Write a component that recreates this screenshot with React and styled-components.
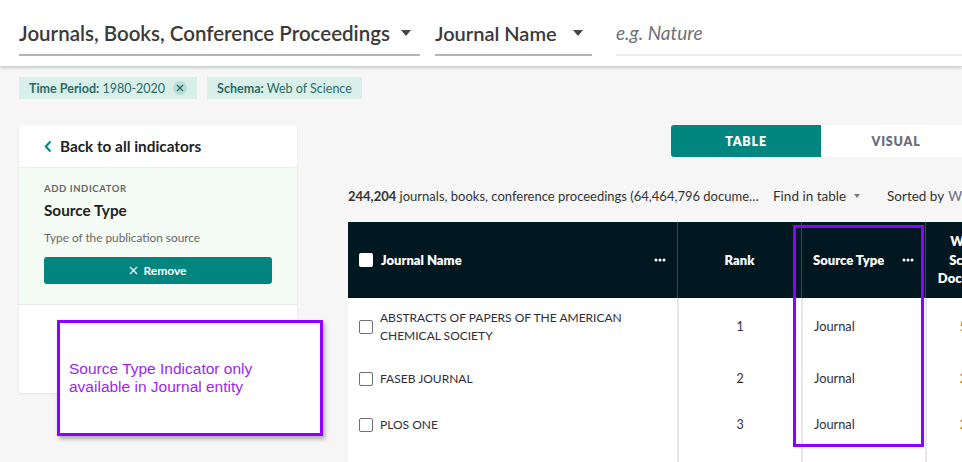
import React from "react";
import styled, { createGlobalStyle } from "styled-components";

const Global = createGlobalStyle`
  html, body { margin: 0; padding: 0; }
  body {
    background: #f6f6f6;
    font-family: "Lato", "Noto Sans", sans-serif;
    color: #333;
    width: 962px;
    height: 462px;
    overflow: hidden;
  }
  * { box-sizing: border-box; }
`;

const Page = styled.div`
  position: relative;
  width: 962px;
  height: 462px;
  overflow: hidden;
`;

const Header = styled.header`
  height: 66px;
  background: #fff;
  box-shadow: 0 2px 3px rgba(0,0,0,0.18);
  display: flex;
  align-items: flex-start;
  padding: 11px 0 0 19px;
  gap: 15px;
  position: relative;
  z-index: 1;
`;

const Select = styled.div`
  height: 45px;
  width: ${p => p.$w}px;
  border-bottom: 2px solid #b5b5b5;
  display: flex;
  align-items: center;
  justify-content: space-between;
  font-size: ${p => p.$fs || 20.5}px;
  font-weight: 600;
  color: #3a3a3a;
  padding-right: 9px;
  white-space: nowrap;
`;

const Caret = styled.span`
  width: 0;
  height: 0;
  border-left: 5px solid transparent;
  border-right: 5px solid transparent;
  border-top: 6px solid #444;
`;

const SearchInput = styled.div`
  margin-left: 9px;
  flex: 1;
  height: 45px;
  border-bottom: 2px solid #ececec;
  display: flex;
  align-items: center;
  font-size: 19px;
  font-style: italic;
  color: #6f6f7a;
`;

const Chips = styled.div`
  display: flex;
  gap: 10px;
  padding: 11px 0 0 19px;
`;

const Chip = styled.div`
  height: 22px;
  background: #d9efea;
  color: #2a6b68;
  font-size: 12.5px;
  display: flex;
  align-items: center;
  padding: 0 10px;
  gap: 8px;
  b { font-weight: 700; }
`;

const ChipClose = styled.span`
  width: 14px;
  height: 14px;
  border-radius: 50%;
  background: #b7ddd6;
  display: flex;
  align-items: center;
  justify-content: center;
`;

const Main = styled.div`
  display: flex;
  padding: 26px 0 0 19px;
  gap: 51px;
`;

const Card = styled.aside`
  width: 278px;
  height: 268px;
  flex-shrink: 0;
  background: #fff;
  box-shadow: 0 1px 3px rgba(0,0,0,0.08);
  border-radius: 3px;
  display: flex;
  flex-direction: column;
`;

const BackRow = styled.div`
  height: 43px;
  border-bottom: 1px solid #ececec;
  display: flex;
  align-items: center;
  padding-left: 25px;
  gap: 8px;
  font-size: 15.3px;
  font-weight: 700;
  color: #222;
`;

const IndicatorBox = styled.div`
  background: #f5fcf5;
  border-bottom: 1px solid #eaeaea;
  padding: 15px 25px 20px;
  display: flex;
  flex-direction: column;
`;

const Overline = styled.div`
  font-size: 9.5px;
  font-weight: 700;
  letter-spacing: 0.6px;
  color: #666;
  text-transform: uppercase;
`;

const IndicatorTitle = styled.div`
  font-size: 15.3px;
  font-weight: 700;
  color: #222;
  margin-top: 7px;
`;

const IndicatorDesc = styled.div`
  font-size: 11.8px;
  color: #666;
  margin-top: 11px;
`;

const RemoveButton = styled.button`
  margin-top: 12px;
  height: 27px;
  width: 100%;
  border: none;
  border-radius: 3px;
  background: #00857f;
  color: #fff;
  font-family: inherit;
  font-size: 12px;
  font-weight: 700;
  display: flex;
  align-items: center;
  justify-content: center;
  gap: 5px;
`;

const Content = styled.section`
  width: 720px;
  flex-shrink: 0;
  display: flex;
  flex-direction: column;
`;

const Tabs = styled.div`
  display: flex;
  margin-left: 323px;
`;

const Tab = styled.div`
  width: 150px;
  height: 32px;
  display: flex;
  align-items: center;
  justify-content: center;
  font-size: 12.5px;
  font-weight: 800;
  letter-spacing: 0.8px;
  border-radius: ${p => (p.$active ? "3px 0 0 3px" : "0")};
  background: ${p => (p.$active ? "#00857f" : "#fff")};
  color: ${p => (p.$active ? "#fff" : "#6b6b7b")};
`;

const Summary = styled.div`
  height: 65px;
  padding-top: 12px;
  display: flex;
  align-items: center;
  font-size: 13px;
  color: #333;
  white-space: nowrap;
  b { font-weight: 700; }
`;

const SummaryText = styled.span`
  width: 414px;
  flex-shrink: 0;
  overflow: hidden;
  text-overflow: ellipsis;
`;

const ToolItem = styled.span`
  display: flex;
  align-items: center;
  flex-shrink: 0;
  gap: 8px;
  margin-left: ${p => p.$ml}px;
  font-size: 13.5px;
  color: #333;
  em { font-style: normal; color: #6b6b7b; margin-left: -4px; }
`;

const SmallCaret = styled.span`
  width: 0;
  height: 0;
  border-left: 3.5px solid transparent;
  border-right: 3.5px solid transparent;
  border-top: 4px solid #777;
`;

const Table = styled.div`
  display: grid;
  grid-template-columns: 329px 124px 124px 92px;
  background: #fff;
`;

const HeadCell = styled.div`
  height: 76px;
  background: #021820;
  color: #fff;
  font-size: 13px;
  font-weight: 800;
  display: flex;
  align-items: center;
  justify-content: ${p => p.$align || "flex-start"};
  padding: 0 11px;
  gap: 8px;
  border-left: ${p => (p.$first ? "none" : "1px solid #3b4a50")};
  text-align: center;
  line-height: 1.45;
  white-space: nowrap;
`;

const Dots = styled.svg`
  margin-left: auto;
  flex-shrink: 0;
`;

const HeadBox = styled.span`
  width: 14px;
  height: 14px;
  background: #fff;
  border-radius: 2px;
  flex-shrink: 0;
`;

const Cell = styled.div`
  height: ${p => p.$h}px;
  display: flex;
  align-items: center;
  justify-content: ${p => p.$align || "flex-start"};
  padding: 0 11px;
  gap: 7px;
  font-size: ${p => p.$fs || 12}px;
  border-left: ${p => (p.$first ? "none" : "2px solid #e6e6e6")};
  line-height: 1.5;
  color: ${p => p.$color || "#2e2e3a"};
`;

const RowBox = styled.span`
  width: 14px;
  height: 14px;
  border: 1px solid #6e6e78;
  border-radius: 2px;
  flex-shrink: 0;
`;

const Annotation = styled.div`
  position: absolute;
  left: 57px;
  top: 320px;
  width: 266px;
  height: 116px;
  border: 3px solid #9000ff;
  background: #fff;
  box-shadow: 2px 3px 4px rgba(0,0,0,0.3);
  display: flex;
  align-items: center;
  padding: 0 0 0 9px;
  font-family: "Liberation Sans", Arial, sans-serif;
  font-size: 15.5px;
  line-height: 18px;
  color: #a01ff0;
`;

const ColumnHighlight = styled.div`
  position: absolute;
  left: 793px;
  top: 225px;
  width: 131px;
  height: 222px;
  border: 3px solid #9000ff;
  pointer-events: none;
`;

const rows = [
  { name: ["ABSTRACTS OF PAPERS OF THE AMERICAN", "CHEMICAL SOCIETY"], rank: 1, h: 58, v: "520,135" },
  { name: ["FASEB JOURNAL"], rank: 2, h: 46, v: "240,613" },
  { name: ["PLOS ONE"], rank: 3, h: 46, v: "229,512" },
  { name: [""], rank: "", h: 40, v: "" },
];

const ThreeDots = () => (
  <Dots width="12" height="4" viewBox="0 0 12 4">
    <circle cx="2" cy="2" r="1.5" fill="#fff" />
    <circle cx="6" cy="2" r="1.5" fill="#fff" />
    <circle cx="10" cy="2" r="1.5" fill="#fff" />
  </Dots>
);

export default function App() {
  return (
    <Page>
      <Global />
      <Header>
        <Select $w={401}>
          Journals, Books, Conference Proceedings <Caret />
        </Select>
        <Select $w={157} $fs={20}>
          Journal Name <Caret />
        </Select>
        <SearchInput>e.g. Nature</SearchInput>
      </Header>
      <Chips>
        <Chip>
          <span><b>Time Period:</b> 1980-2020</span>
          <ChipClose>
            <svg width="8" height="8" viewBox="0 0 8 8">
              <path d="M1 1L7 7M7 1L1 7" stroke="#2a6b68" strokeWidth="1.4" />
            </svg>
          </ChipClose>
        </Chip>
        <Chip>
          <span><b>Schema:</b> Web of Science</span>
        </Chip>
      </Chips>
      <Main>
        <Card>
          <BackRow>
            <svg width="8" height="13" viewBox="0 0 8 13">
              <path d="M6.5 1.5L1.8 6.5L6.5 11.5" fill="none" stroke="#00857f" strokeWidth="2" />
            </svg>
            Back to all indicators
          </BackRow>
          <IndicatorBox>
            <Overline>Add indicator</Overline>
            <IndicatorTitle>Source Type</IndicatorTitle>
            <IndicatorDesc>Type of the publication source</IndicatorDesc>
            <RemoveButton>
              <svg width="9" height="9" viewBox="0 0 9 9">
                <path d="M1 1L8 8M8 1L1 8" stroke="#fff" strokeWidth="1.3" />
              </svg>
              Remove
            </RemoveButton>
          </IndicatorBox>
        </Card>
        <Content>
          <Tabs>
            <Tab $active>TABLE</Tab>
            <Tab>VISUAL</Tab>
          </Tabs>
          <Summary>
            <SummaryText>
              <b>244,204</b> journals, books, conference proceedings (64,464,796 documents)
            </SummaryText>
            <ToolItem $ml={11}>Find in table <SmallCaret /></ToolItem>
            <ToolItem $ml={27}>Sorted by <em>Web of Science Documents</em></ToolItem>
          </Summary>
          <Table>
            <HeadCell $first>
              <HeadBox />
              Journal Name
              <ThreeDots />
            </HeadCell>
            <HeadCell $align="center">Rank</HeadCell>
            <HeadCell>
              Source Type
              <ThreeDots />
            </HeadCell>
            <HeadCell $align="center">
              <span>Web of<br />Science<br />Documents</span>
            </HeadCell>
            {rows.map((r, i) => (
              <React.Fragment key={i}>
                <Cell $first $h={r.h}>
                  {r.name[0] !== "" && <RowBox />}
                  <span>
                    {r.name.map((n, j) => (
                      <div key={j}>{n}</div>
                    ))}
                  </span>
                </Cell>
                <Cell $h={r.h} $align="center" $fs={12.5}>{r.rank}</Cell>
                <Cell $h={r.h} $fs={12.8}>{r.rank !== "" ? "Journal" : ""}</Cell>
                <Cell $h={r.h} $align="flex-end" $color="#a8703a" $fs={12.5}>{r.v}</Cell>
              </React.Fragment>
            ))}
          </Table>
        </Content>
      </Main>
      <Annotation>
        Source Type Indicator only<br />available in Journal entity
      </Annotation>
      <ColumnHighlight />
    </Page>
  );
}
